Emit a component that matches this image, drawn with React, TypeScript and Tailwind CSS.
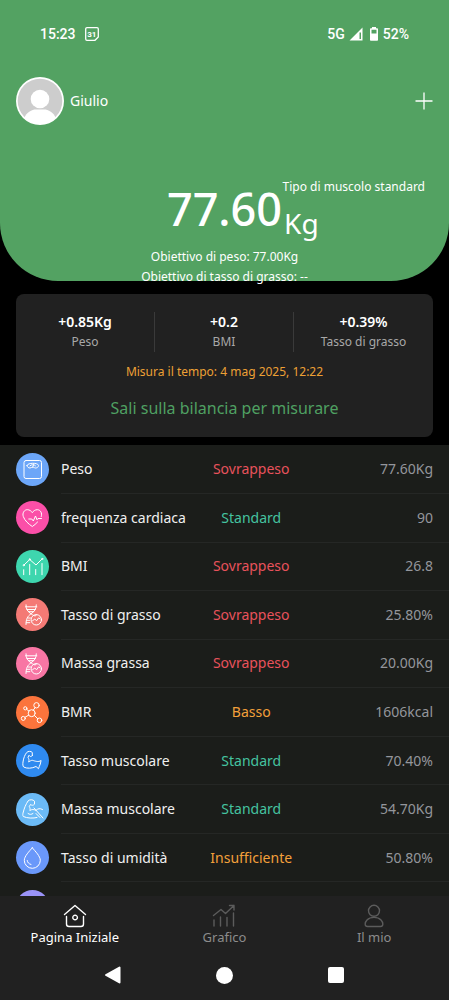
import React from 'react';
import { clsx } from 'clsx';

type Status = 'Sovrappeso' | 'Standard' | 'Basso' | 'Insufficiente';

interface Metric {
  name: string;
  status?: Status;
  value: string;
  color: string;
  icon: React.ReactNode;
}

const STATUS_COLORS: Record<Status, string> = {
  Sovrappeso: 'text-[#e8525c]',
  Standard: 'text-[#45c3a0]',
  Basso: 'text-[#f3a03a]',
  Insufficiente: 'text-[#f3a03a]',
};

const dnaIcon = (
  <>
    <path d="M10 6.800c0 4.500 1.500 6.500 5 9s5.300 3 5.300 .8M20.300 6.800c0 4.500-1.800 6.500-5.300 9s-5 5-5 10.700" />
    <path d="M9.500 8.800h11.300M11 11.500h8.300M12.500 13.700h5.200M12 20h2.500M10.800 22.300h3M10.300 24.700h3.500" />
    <circle cx="20.300" cy="21.800" r="5.200" />
    <path d="m16.500 22.800 2.300-1.800 1.700 1.800 2.200-3 1.300 1" />
  </>
);

const METRICS: Metric[] = [
  {
    name: 'Peso',
    status: 'Sovrappeso',
    value: '77.60Kg',
    color: 'bg-[#6ca6f8]',
    icon: (
      <>
        <rect x="8" y="7.500" width="17.500" height="18" rx="2" />
        <path d="M11 12.500c0-3 11.500-3 11.500 0 0 1.500-1.500 2.500-3 2.500-1 0-1.300-.8-2.700-.8s-1.700.8-2.800.8c-1.500 0-3-1-3-2.500ZM14 12.800c1.500-1.500 4-1.500 5.500 0M16.700 14l1-2.500" />
      </>
    ),
  },
  {
    name: 'frequenza cardiaca',
    status: 'Standard',
    value: '90',
    color: 'bg-[#fb4fa8]',
    icon: (
      <>
        <path d="M25.300 15.500c1.200-3.500-1-6.800-4-6.800-2.200 0-4 1.300-5 3-1-1.700-2.800-3-5-3-3 0-5.200 3.300-4 6.800 1.300 4 5.200 7.500 9 10 1.800-1.200 3.700-2.700 5.300-4.500" />
        <path d="M12.800 18h3l1.500 2 2.200-5 1.500 3.800 1-1.300h3.500" />
      </>
    ),
  },
  {
    name: 'BMI',
    status: 'Sovrappeso',
    value: '26.8',
    color: 'bg-[#3ed6ae]',
    icon: (
      <>
        <path d="m8 15 5.700-5.500L20 15l6-6" />
        <path d="M7.700 19.700v5M13.700 14.500v10.200M19.700 19.500v5.200M26 13.500v11.200" />
        <circle cx="7.700" cy="15.200" r=".6" />
        <circle cx="13.700" cy="9.300" r=".6" />
        <circle cx="26.200" cy="8.900" r=".6" />
      </>
    ),
  },
  { name: 'Tasso di grasso', status: 'Sovrappeso', value: '25.80%', color: 'bg-[#f47a75]', icon: dnaIcon },
  { name: 'Massa grassa', status: 'Sovrappeso', value: '20.00Kg', color: 'bg-[#f876a4]', icon: dnaIcon },
  {
    name: 'BMR',
    status: 'Basso',
    value: '1606kcal',
    color: 'bg-[#fb743c]',
    icon: (
      <>
        <circle cx="15.700" cy="17.200" r="3.500" />
        <circle cx="9.300" cy="12.300" r="1.600" />
        <circle cx="20.500" cy="9.300" r="2.700" />
        <circle cx="7.300" cy="22.400" r="2" />
        <circle cx="23.500" cy="24.300" r="2.300" />
        <path d="m10.600 13.300 2.300 1.800M17.300 14.100l1.800-2.500M12.700 19.100l-3.700 2.200M18.500 19.500l3.200 3.200" />
      </>
    ),
  },
  {
    name: 'Tasso muscolare',
    status: 'Standard',
    value: '70.40%',
    color: 'bg-[#2f8af0]',
    icon: (
      <path d="M16.300 11.500v-3c-1.200-1.500-4.300-1.500-5.600 0C9 10.500 7.500 14 7 18c-.3 2.500-.2 4 .7 5 3 1.800 8.300 1.500 12.300-.5l2.500 2.200.8-2.200 1-2.500.8-3.500c-3 2-6 .5-8.800-.2-1.500 0-2 .8-3.600 1.700.6-2 .2-3-.7-4.700l1-2c1 1.500 2 1.800 3.300.2Z" />
    ),
  },
  {
    name: 'Massa muscolare',
    status: 'Standard',
    value: '54.70Kg',
    color: 'bg-[#6bbaf6]',
    icon: (
      <>
        <path d="M21 24.500c-3.500 1-10 .8-13.700-1-.8-1-.5-3 0-4.500 1-4 2.500-7.500 4.700-11 1.500-1.700 5-1.700 6.500.2v3c-1.500 1.500-2.700 1.200-4 .3l-1.200 2c.8 1.500 1 2.700.5 4 2-1.300 4.200-1.300 6 0 2.200-2 4-2.500 6.700-1" />
        <path d="m18 15 9 10M20 20.500l4 4M12 20.500c1.500 1.200 3.500 1.200 5 0" />
      </>
    ),
  },
  {
    name: 'Tasso di umidità',
    status: 'Insufficiente',
    value: '50.80%',
    color: 'bg-[#6a98fa]',
    icon: (
      <>
        <path d="M16.300 6.800c3 3.500 8 8.500 8 12.500a8 8 0 0 1-16 0c0-4 5-9 8-12.500Z" />
        <path d="M11.200 19.500c.3 2 1.700 3.500 3.800 4" />
      </>
    ),
  },
  { name: '', value: '', color: 'bg-[#9a93f8]', icon: null },
];

const DELTAS = [
  { value: '+0.85Kg', label: 'Peso' },
  { value: '+0.2', label: 'BMI' },
  { value: '+0.39%', label: 'Tasso di grasso' },
];

const TABS = [
  {
    label: 'Pagina Iniziale',
    icon: <path d="M1.500 10.500 12 1.500l10.500 9M3.500 12.500V20c0 1.500 1 2.500 2.500 2.500h12c1.500 0 2.500-1 2.500-2.500v-7.500M9.800 13.500a2.300 2.300 0 1 0 4.600 0 2.300 2.300 0 1 0-4.600 0Z" />,
  },
  {
    label: 'Grafico',
    icon: <path d="M2 16v6M8.500 13v9M15 13.500V22M21.500 9v13M1.500 11.500 9 5.500l4.500 4 8.500-8M17.500 1.500H22V6" />,
  },
  {
    label: 'Il mio',
    icon: <path d="M6.500 6.800a5.500 5.500 0 1 0 11 0 5.500 5.500 0 1 0-11 0ZM5.500 22.500h13c3.500 0 2.500-4.500.5-6.500-3.500-3.500-10.500-3.500-14 0-2 2-3 6.500.5 6.500Z" />,
  },
];

function StatusBar() {
  return (
    <div className="flex h-5 items-center justify-between px-6 font-[Roboto,sans-serif] text-sm font-medium">
      <div className="flex items-center gap-2">
        <span>15:23</span>
        <svg viewBox="0 0 16 16" className="size-4" fill="none" stroke="currentColor" strokeWidth="1.300">
          <path d="M1.700 3A1.300 1.300 0 0 1 3 1.700h10A1.300 1.300 0 0 1 14.300 3v8l-3.300 3.300H3A1.300 1.300 0 0 1 1.700 13Z" />
          <text x="7.800" y="10.800" textAnchor="middle" fontSize="8" fontWeight="700" fill="currentColor" stroke="none">31</text>
        </svg>
      </div>
      <div className="flex items-center gap-1">
        <span>5G</span>
        <svg viewBox="0 0 14 14" className="size-3.5" fill="currentColor">
          <path fillRule="evenodd" d="M13.500.5v13H.5ZM10.500 5.500V12H12V5.500Z" />
        </svg>
        <svg viewBox="2 0 10 14" className="ml-0.5 h-3.5 w-2.5" fill="currentColor">
          <path fillRule="evenodd" d="M5 0h4v1.200h1.200c.5 0 .8.300.8.800v11c0 .5-.3.800-.8.800H3.800c-.5 0-.8-.3-.8-.8V2c0-.5.300-.8.800-.8H5ZM4.500 2.800v3.700h5V2.800Z" />
        </svg>
        <span>52%</span>
      </div>
    </div>
  );
}

function Header() {
  return (
    <header className="h-[281px] shrink-0 rounded-b-[58px] bg-[#53a262] px-4 pt-6 text-white">
      <StatusBar />

      <div className="mt-[33px] flex items-center justify-between">
        <div className="flex items-center gap-1.5">
          <svg viewBox="0 0 48 48" className="size-12">
            <defs>
              <clipPath id="avatar"><circle cx="24" cy="24" r="23" /></clipPath>
            </defs>
            <circle cx="24" cy="24" r="24" fill="#fff" />
            <circle cx="24" cy="24" r="22.300" fill="#cdcdcd" />
            <g clipPath="url(#avatar)" fill="#fff">
              <circle cx="24" cy="22" r="9.300" />
              <path d="M8 48v-6c2-7 8-9.500 12-9.500h8c4 0 10 2.500 12 9.500v6Z" />
            </g>
          </svg>
          <span className="text-sm">Giulio</span>
        </div>
        <button type="button" aria-label="Aggiungi">
          <svg viewBox="0 0 18 18" className="size-[18px]" fill="none" stroke="currentColor" strokeWidth="1.300">
            <path d="M9 .5v17M.5 9h17" />
          </svg>
        </button>
      </div>

      <div className="mt-12 grid grid-cols-[1fr_auto_1fr]">
        <p className="col-start-2 pt-2 text-[45px] leading-[56px] font-medium">77.60</p>
        <div>
          <p className="pt-1 pr-2 text-right text-xs leading-5 whitespace-nowrap">Tipo di muscolo standard</p>
          <p className="pt-1.5 pl-0.5 text-[28px] leading-10">Kg</p>
        </div>
      </div>

      <div className="pt-1 text-center text-xs leading-5">
        <p>Obiettivo di peso: 77.00Kg</p>
        <p>Obiettivo di tasso di grasso: --</p>
      </div>
    </header>
  );
}

function SummaryCard() {
  return (
    <section className="mx-4 mt-[13px] mb-2 shrink-0 rounded-lg bg-[#212121] pt-[18px] pb-[17px] text-center">
      <div className="grid grid-cols-3 divide-x divide-[#3a3a3a]">
        {DELTAS.map(d => (
          <div key={d.label}>
            <p className="text-sm leading-5 font-semibold text-white">{d.value}</p>
            <p className="text-xs leading-5 text-[#a8a8a8]">{d.label}</p>
          </div>
        ))}
      </div>
      <p className="mt-2.5 text-xs leading-5 text-[#eda035]">Misura il tempo: 4 mag 2025, 12:22</p>
      <button type="button" className="mt-3.5 block w-full text-base leading-6 text-[#4fa062]">
        Sali sulla bilancia per misurare
      </button>
    </section>
  );
}

function MetricsTable() {
  return (
    <main className="min-h-0 flex-1 overflow-y-auto bg-[#1b1d1a] [scrollbar-width:none]">
      <table className="h-[486px] w-full table-fixed text-sm">
        <colgroup>
          <col className="w-[61px]" />
          <col />
          <col className="w-[23%]" />
          <col className="w-[33%]" />
        </colgroup>
        <tbody>
          {METRICS.map(m => (
            <tr key={m.color}>
              <td className="pl-4">
                <div className={clsx('size-[33px] rounded-full', m.color)}>
                  <svg viewBox="0 0 33 33" fill="none" stroke="#fff" strokeWidth="1" strokeLinecap="round" strokeLinejoin="round">
                    {m.icon}
                  </svg>
                </div>
              </td>
              <th scope="row" className="border-b border-[#252725] text-left font-normal whitespace-nowrap text-[#f0f0f0]">
                {m.name}
              </th>
              <td className={clsx('border-b border-[#252725] pl-1 text-center', m.status && STATUS_COLORS[m.status])}>{m.status}</td>
              <td className="border-b border-[#252725] pr-4 text-right text-[#94969c]">{m.value}</td>
            </tr>
          ))}
        </tbody>
      </table>
    </main>
  );
}

function BottomBar() {
  return (
    <footer className="shrink-0 bg-[#212121]">
      <nav className="grid grid-cols-3 pt-2">
        {TABS.map((tab, i) => (
          <button
            key={tab.label}
            type="button"
            className={clsx('flex flex-col items-center text-[13px] leading-[18px]', i === 0 ? 'text-white' : 'text-[#8c8c8c]')}
          >
            <svg
              viewBox="0 0 24 24"
              className={clsx('size-6', i !== 0 && 'text-[#5c5c5c]')}
              fill="none"
              stroke="currentColor"
              strokeWidth="1.400"
              strokeLinecap="round"
              strokeLinejoin="round"
            >
              {tab.icon}
            </svg>
            {tab.label}
          </button>
        ))}
      </nav>
      {/* Android system navigation */}
      <div className="grid h-[54px] grid-cols-3 items-center px-[57px] pt-1 text-white">
        <button type="button" aria-label="Indietro" className="flex justify-center">
          <svg viewBox="0 0 18 18" className="size-[18px]" fill="currentColor" stroke="currentColor" strokeWidth="2" strokeLinejoin="round">
            <path d="M15.500 1.500v15L2 9Z" />
          </svg>
        </button>
        <button type="button" aria-label="Home" className="flex justify-center">
          <span className="size-[17px] rounded-full bg-white" />
        </button>
        <button type="button" aria-label="Recenti" className="flex justify-center">
          <span className="size-4 rounded-xs bg-white" />
        </button>
      </div>
    </footer>
  );
}

export default function App() {
  return (
    <div className="flex h-screen flex-col bg-black font-['Noto_Sans',sans-serif]">
      <Header />
      <SummaryCard />
      <MetricsTable />
      <BottomBar />
    </div>
  );
}
